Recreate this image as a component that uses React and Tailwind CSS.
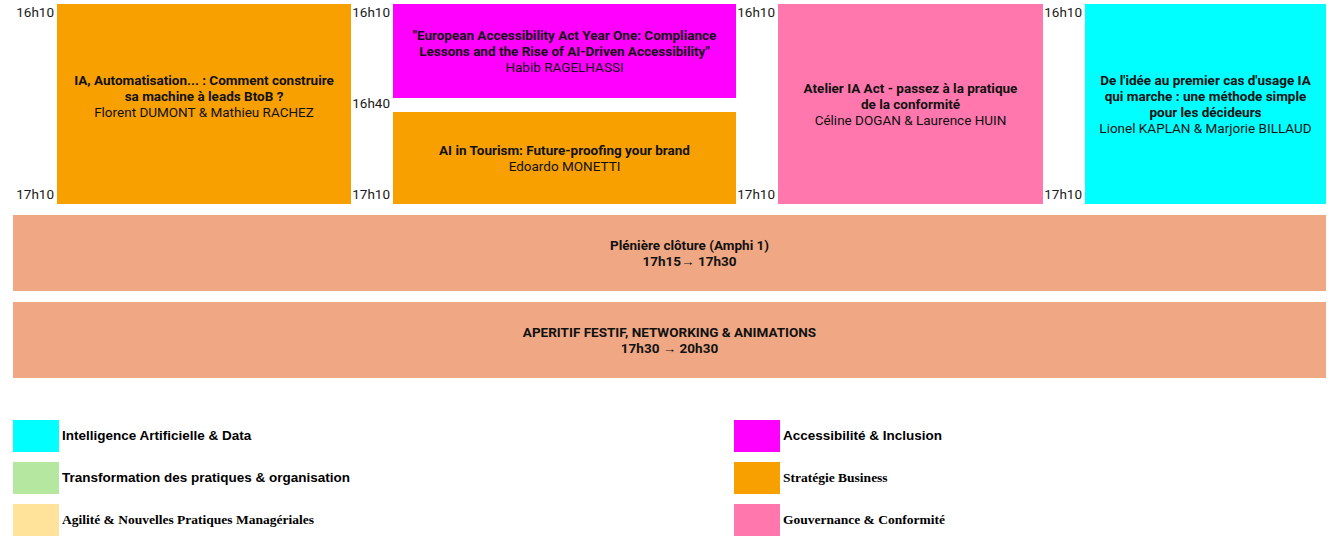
import React from "react";

const sessions = [
  {
    times: ["16h10", "17h10"],
    labelW: "w-[44px]",
    blocks: [
      {
        w: "w-[294px]",
        h: "h-full",
        bg: "bg-[#f7a000]",
        title: ["IA, Automatisation... : Comment construire", "sa machine à leads BtoB ?"],
        speaker: "Florent DUMONT & Mathieu RACHEZ",
        extraLine: true,
      },
    ],
  },
  {
    times: ["16h10", "16h40", "17h10"],
    labelW: "w-[42px]",
    blocks: [
      {
        w: "w-[343px]",
        h: "h-[94px]",
        bg: "bg-[#ff00ff]",
        title: ['"European Accessibility Act Year One: Compliance', 'Lessons and the Rise of AI-Driven Accessibility"'],
        speaker: "Habib RAGELHASSI",
      },
      {
        w: "w-[343px]",
        h: "h-[92px]",
        bg: "bg-[#f7a000]",
        title: ["AI in Tourism: Future-proofing your brand"],
        speaker: "Edoardo MONETTI",
      },
    ],
  },
  {
    times: ["16h10", "17h10"],
    labelW: "w-[42px]",
    blocks: [
      {
        w: "w-[265px]",
        h: "h-full",
        bg: "bg-[#ff77ad]",
        title: ["Atelier IA Act - passez à la pratique", "de la conformité"],
        speaker: "Céline DOGAN & Laurence HUIN",
      },
    ],
  },
  {
    times: ["16h10", "17h10"],
    labelW: "w-[42px]",
    blocks: [
      {
        w: "w-[241px]",
        h: "h-full",
        bg: "bg-[#00ffff]",
        title: ["De l'idée au premier cas d'usage IA", "qui marche : une méthode simple", "pour les décideurs"],
        speaker: "Lionel KAPLAN & Marjorie BILLAUD",
      },
    ],
  },
];

const legend = [
  { color: "bg-[#00ffff]", label: "Intelligence Artificielle & Data", serif: false },
  { color: "bg-[#ff00ff]", label: "Accessibilité & Inclusion", serif: false },
  { color: "bg-[#b6e7a1]", label: "Transformation des pratiques & organisation", serif: false },
  { color: "bg-[#f7a000]", label: "Stratégie Business", serif: true },
  { color: "bg-[#ffe39b]", label: "Agilité & Nouvelles Pratiques Managériales", serif: true },
  { color: "bg-[#ff77ad]", label: "Gouvernance & Conformité", serif: true },
];

function Block({ block }) {
  return (
    <div className={`${block.w} ${block.h} ${block.bg} flex flex-col items-center justify-center text-center leading-[16px]`}>
      {block.title.map((line) => (
        <div key={line} className="font-bold whitespace-nowrap">{line}</div>
      ))}
      <div className="whitespace-nowrap">{block.speaker}</div>
      {block.extraLine && <div className="h-[16px]" />}
    </div>
  );
}

export default function App() {
  return (
    <div className="bg-white min-h-screen pl-[13px] pr-[10px] pt-[4px] text-[13.5px] text-[#111] font-['Roboto',sans-serif]">
      {/* Parallel sessions */}
      <div className="flex h-[200px]">
        {sessions.map((col, i) => (
          <React.Fragment key={i}>
            <div className={`${col.labelW} shrink-0 flex flex-col justify-between items-end pr-[3px] pt-[1px] pb-[2px] leading-[15px] text-[#1a1a1a]`}>
              {col.times.map((t, j) => (
                <span key={j}>{t}</span>
              ))}
            </div>
            <div className="flex flex-col justify-between">
              {col.blocks.map((b, j) => (
                <Block key={j} block={b} />
              ))}
            </div>
          </React.Fragment>
        ))}
      </div>

      {/* Plenary */}
      <div className="mt-[11px] h-[76px] bg-[#f0a884] flex flex-col items-center justify-center pl-[40px] font-bold leading-[16px]">
        <div>Plénière clôture (Amphi 1)</div>
        <div>17h15→ 17h30</div>
      </div>

      <div className="mt-[11px] h-[76px] bg-[#f0a884] flex flex-col items-center justify-center font-bold leading-[16px]">
        <div>APERITIF FESTIF, NETWORKING &amp; ANIMATIONS</div>
        <div>17h30 → 20h30</div>
      </div>

      {/* Legend */}
      <div className="mt-[42px] grid grid-cols-[721px_1fr] gap-y-[10px] text-black">
        {legend.map((item) => (
          <div key={item.label} className="flex items-center h-[32px]">
            <div className={`${item.color} w-[46px] h-full shrink-0`} />
            <span
              className={`ml-[3px] font-bold text-[13.5px] ${
                item.serif
                  ? "font-['Liberation_Serif',serif]"
                  : "font-['Liberation_Sans',Arial,sans-serif]"
              }`}
            >
              {item.label}
            </span>
          </div>
        ))}
      </div>
    </div>
  );
}
